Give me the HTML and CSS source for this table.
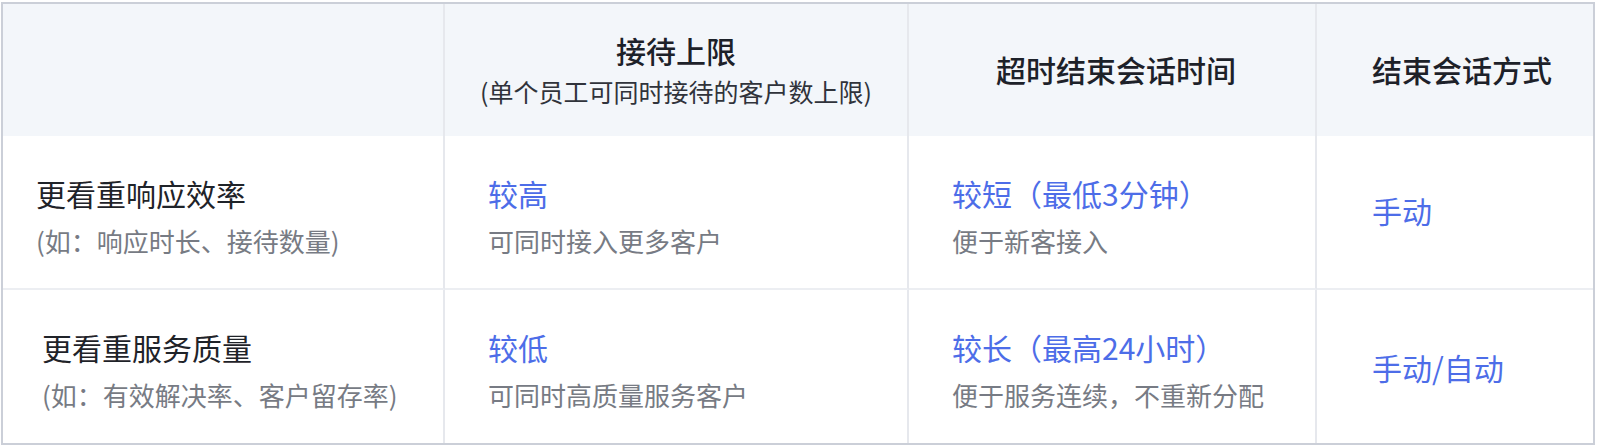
FILE: index.html
```html
<!DOCTYPE html>
<html lang="zh-CN">
<head>
<meta charset="utf-8">
<title>接待策略对比</title>
<link rel="stylesheet" href="styles.css">
</head>
<body>
<div class="table">
  <div class="cell head"></div>
  <div class="cell head head-center">
    <div class="head-title">接待上限</div>
    <div class="head-sub">(单个员工可同时接待的客户数上限)</div>
  </div>
  <div class="cell head head-center head-shift">
    <div class="head-title">超时结束会话时间</div>
  </div>
  <div class="cell head head-left last">
    <div class="head-title">结束会话方式</div>
  </div>

  <div class="cell body first r1">
    <div class="title">更看重响应效率</div>
    <div class="sub">(如：响应时长、接待数量)</div>
  </div>
  <div class="cell body r1">
    <div class="title blue">较高</div>
    <div class="sub">可同时接入更多客户</div>
  </div>
  <div class="cell body r1">
    <div class="title blue">较短（最低3分钟）</div>
    <div class="sub">便于新客接入</div>
  </div>
  <div class="cell body single last r1">
    <div class="title blue">手动</div>
  </div>

  <div class="cell body first r2">
    <div class="title">更看重服务质量</div>
    <div class="sub">(如：有效解决率、客户留存率)</div>
  </div>
  <div class="cell body r2">
    <div class="title blue">较低</div>
    <div class="sub">可同时高质量服务客户</div>
  </div>
  <div class="cell body r2">
    <div class="title blue">较长（最高24小时）</div>
    <div class="sub">便于服务连续，不重新分配</div>
  </div>
  <div class="cell body single last r2">
    <div class="title blue">手动/自动</div>
  </div>
</div>
</body>
</html>
```
FILE: styles.css
```css
* {
  box-sizing: border-box;
}

html, body {
  margin: 0;
  padding: 0;
  background: #ffffff;
}

body {
  font-family: "Noto Sans CJK SC", "Noto Sans", sans-serif;
  color: #1f2329;
}

.table {
  margin: 2px 5px 0 1px;
  width: 1594px;
  border: 2px solid #cbcfd8;
  display: grid;
  grid-template-columns: 442px 464px 408px 1fr;
  grid-template-rows: 132px 154px 153px;
}

.cell {
  border-right: 2px solid #e6e8ed;
  display: flex;
  flex-direction: column;
  justify-content: center;
}

.cell.last {
  border-right: none;
}

.head {
  background: #f3f6fa;
}

.head-center {
  align-items: center;
  text-align: center;
}

.head-shift {
  padding-left: 8px;
  padding-bottom: 3px;
}

.head-left {
  padding-left: 55px;
  padding-bottom: 3px;
}

.head-title {
  font-size: 30px;
  line-height: 36px;
  font-weight: 500;
  color: #1d2129;
}

.head-sub {
  font-size: 25px;
  line-height: 34px;
  margin-top: 6px;
  color: #30333b;
}

.body {
  padding-left: 43px;
  padding-top: 7px;
}

.body.r1 {
  border-bottom: 2px solid #eceef2;
}

.body.first.r1 {
  padding-left: 33px;
}

.body.first.r2 {
  padding-left: 39px;
}

.body.single {
  padding-left: 55px;
  padding-top: 0;
}

.body.single.r1 {
  padding-bottom: 5px;
}

.title {
  font-size: 30px;
  line-height: 40px;
  color: #1f2329;
}

.sub {
  font-size: 26px;
  line-height: 36px;
  margin-top: 10px;
  color: #777b84;
}

.blue {
  color: #4d6de8;
}
```
